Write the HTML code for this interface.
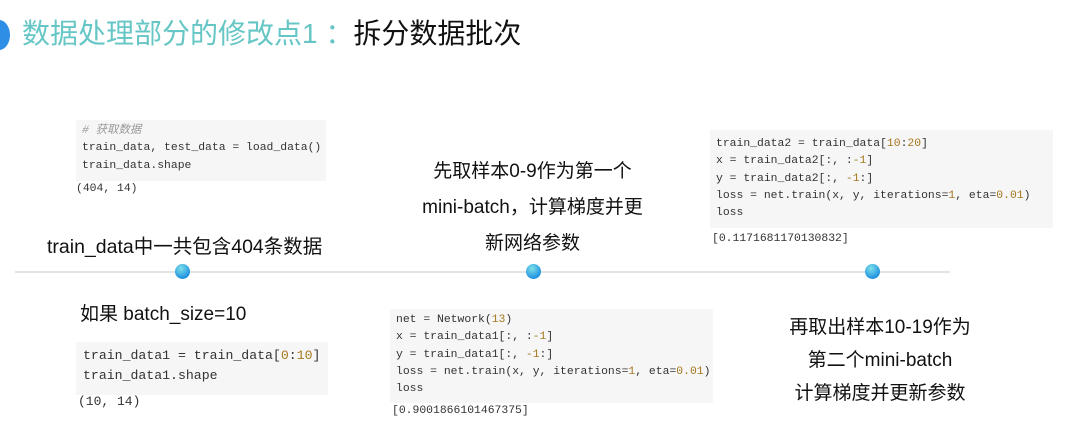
<!DOCTYPE html><html><head><meta charset="utf-8"><style>
body{margin:0;width:1088px;height:444px;background:#fff;position:relative;overflow:hidden;font-family:"Liberation Sans","Noto Sans CJK SC",sans-serif;color:#111}
.a{position:absolute;white-space:nowrap}
.box{position:absolute;background:#f6f6f6}
.code{position:absolute;font-family:"Liberation Mono","DejaVu Sans Mono",monospace;font-size:11.4px;line-height:17.3px;color:#333;white-space:pre}
.n{color:#a5781e}
.t{font-size:19px}
.dot{position:absolute;width:15px;height:15px;border-radius:50%;background:radial-gradient(circle at 40% 30%,#7ee0e8,#1a8ee0 75%)}
</style></head><body>
<div class="a" style="left:-12px;top:20px;width:22px;height:30px;border-radius:50%;background:#2e8ee6"></div>
<div class="a" style="left:22px;top:12px;font-size:28px;color:#66c6c6">数据处理部分的修改点1 ：<span style="color:#111">拆分数据批次</span></div>

<div class="box" style="left:76px;top:120px;width:250px;height:61px"></div>
<div class="code" style="left:82px;top:123px"><span style="color:#999;font-style:italic"># 获取数据</span>
train_data, test_data = load_data()
train_data.shape</div>
<div class="code" style="left:76px;top:181px">(404, 14)</div>
<div class="a t" style="left:47px;top:230px;font-size:19.5px">train_data中一共包含404条数据</div>

<div class="a" style="left:15px;top:271px;width:935px;height:2px;background:#e4e4e4"></div>
<div class="dot" style="left:175px;top:264px"></div>
<div class="dot" style="left:526px;top:264px"></div>
<div class="dot" style="left:865px;top:264px"></div>

<div class="a t" style="left:80px;top:299px">如果 batch_size=10</div>
<div class="box" style="left:76px;top:342px;width:252px;height:53px"></div>
<div class="code" style="left:83px;top:346px;font-size:13.2px;line-height:20px">train_data1 = train_data[<span class="n">0</span>:<span class="n">10</span>]
train_data1.shape</div>
<div class="code" style="left:78px;top:393px;font-size:13px">(10, 14)</div>

<div class="a t" style="left:415px;top:154px;width:235px;text-align:center;line-height:36px">先取样本0-9作为第一个<br>mini-batch，计算梯度并更<br>新网络参数</div>

<div class="box" style="left:390px;top:309px;width:323px;height:94px"></div>
<div class="code" style="left:396px;top:312px">net = Network(<span class="n">13</span>)
x = train_data1[:, :<span class="n">-1</span>]
y = train_data1[:, <span class="n">-1</span>:]
loss = net.train(x, y, iterations=<span class="n">1</span>, eta=<span class="n">0.01</span>)
loss</div>
<div class="code" style="left:392px;top:403px">[0.9001866101467375]</div>

<div class="box" style="left:710px;top:130px;width:343px;height:98px"></div>
<div class="code" style="left:716px;top:136px">train_data2 = train_data[<span class="n">10</span>:<span class="n">20</span>]
x = train_data2[:, :<span class="n">-1</span>]
y = train_data2[:, <span class="n">-1</span>:]
loss = net.train(x, y, iterations=<span class="n">1</span>, eta=<span class="n">0.01</span>)
loss</div>
<div class="code" style="left:712px;top:231px">[0.1171681170130832]</div>

<div class="a t" style="left:760px;top:311px;width:240px;text-align:center;line-height:33px">再取出样本10-19作为<br>第二个mini-batch<br>计算梯度并更新参数</div>
</body></html>
